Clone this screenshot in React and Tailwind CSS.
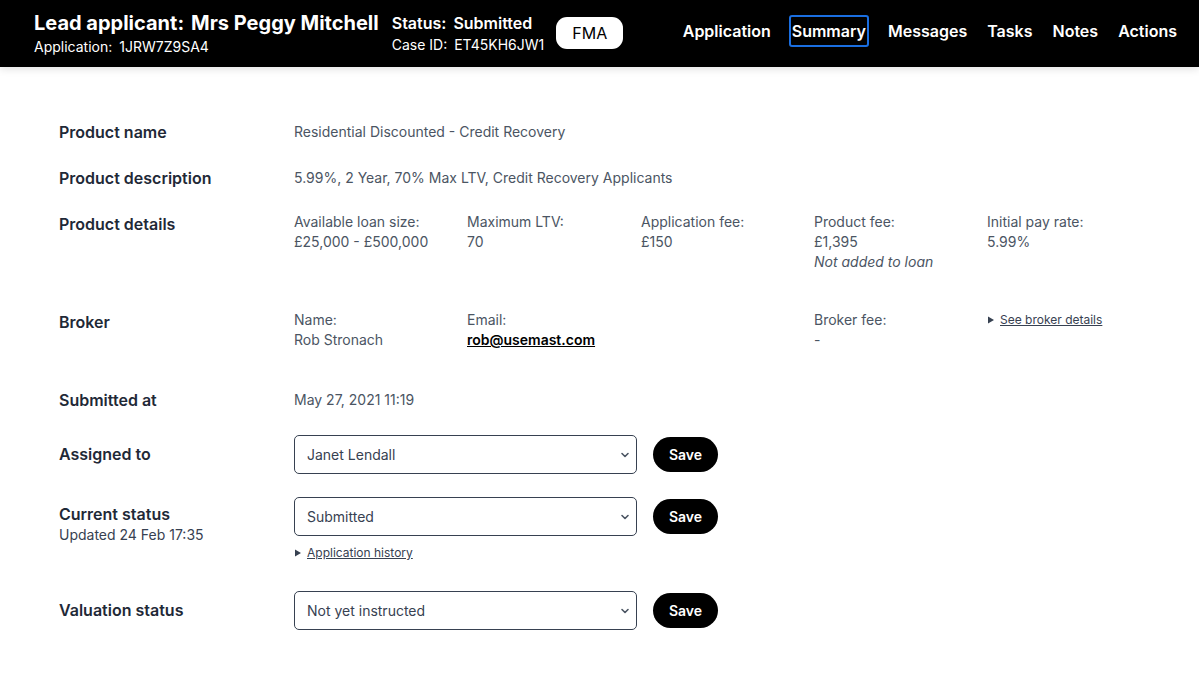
import React from "react";

const font = { fontFamily: "Inter, 'Noto Sans', sans-serif" };

function Field({ label, value, children }) {
  return (
    <div className="text-[14px] leading-[20px] text-[#4b5563]">
      <div>{label}</div>
      {value !== undefined && <div>{value}</div>}
      {children}
    </div>
  );
}

function Select({ value }) {
  return (
    <div className="relative w-[343px] h-[39px] border border-[#374151] rounded-[5px] flex items-center pl-[12px] text-[14px] text-[#374151] bg-white">
      {value}
      <svg className="absolute right-[6px] top-[15px]" width="10" height="8" viewBox="0 0 10 8">
        <path d="M2 2.5 L5 5.5 L8 2.5" stroke="#4b5563" strokeWidth="1.6" fill="none" strokeLinecap="round" strokeLinejoin="round" />
      </svg>
    </div>
  );
}

function SaveBtn() {
  return (
    <button className="ml-[16px] w-[65px] h-[35px] rounded-full bg-black text-white text-[14px] font-semibold">
      Save
    </button>
  );
}

function Disclosure({ text }) {
  return (
    <div className="flex items-center text-[12px] leading-[16px] text-[#374151]">
      <svg width="8" height="8" viewBox="0 0 8 8" className="mr-[5px]">
        <path d="M1 0.5 L7 4 L1 7.5 Z" fill="#374151" />
      </svg>
      <span className="underline">{text}</span>
    </div>
  );
}

export default function App() {
  return (
    <div className="min-h-[696px] bg-white" style={font}>
      <header className="h-[67px] bg-black text-white flex items-start shadow-[0_2px_8px_rgba(0,0,0,0.12)] relative z-10">
        <div className="pl-[34px] pt-[11px]">
          <div className="text-[20px] font-bold leading-[24px]">
            Lead applicant:<span className="ml-[7px]">Mrs Peggy Mitchell</span>
          </div>
          <div className="text-[14px] leading-[18px] mt-[3px]">
            Application:<span className="ml-[7px]">1JRW7Z9SA4</span>
          </div>
        </div>
        <div className="ml-[13px] pt-[13px]">
          <div className="text-[16px] font-semibold leading-[20px]">
            Status:<span className="ml-[7px]">Submitted</span>
          </div>
          <div className="text-[14px] leading-[18px] mt-[3px]">
            Case ID:<span className="ml-[7px]">ET45KH6JW1</span>
          </div>
        </div>
        <div className="ml-[12px] mt-[17px] w-[67px] h-[32px] rounded-[11px] bg-white text-black text-[16px] flex items-center justify-center">
          FMA
        </div>
        <nav className="ml-auto pr-[22px] flex items-center h-[62px] text-[16px] font-semibold">
          <span className="mr-[18px]">Application</span>
          <span className="border-2 border-[#1a6ee0] rounded-[3px] px-[1px] h-[32px] flex items-center leading-none mr-[19px]">Summary</span>
          <span className="mr-[20px]">Messages</span>
          <span className="mr-[20px]">Tasks</span>
          <span className="mr-[20px]">Notes</span>
          <span>Actions</span>
        </nav>
      </header>

      <main className="pl-[59px] pt-[55px] text-[#1f2937]">
        <div className="flex h-[46px]">
          <div className="w-[235px] text-[16px] font-semibold leading-[20px]">Product name</div>
          <div className="text-[14px] leading-[20px] text-[#4b5563]">Residential Discounted - Credit Recovery</div>
        </div>
        <div className="flex h-[46px]">
          <div className="w-[235px] text-[16px] font-semibold leading-[20px]">Product description</div>
          <div className="text-[14px] leading-[20px] text-[#4b5563]">5.99%, 2 Year, 70% Max LTV, Credit Recovery Applicants</div>
        </div>
        <div className="flex h-[98px]">
          <div className="w-[235px] text-[16px] font-semibold leading-[20px]">Product details</div>
          <div className="grid grid-cols-[173px_174px_173px_173px_173px] -mt-[2px]">
            <Field label="Available loan size:" value="£25,000 - £500,000" />
            <Field label="Maximum LTV:" value="70" />
            <Field label="Application fee:" value="£150" />
            <Field label="Product fee:" value="£1,395">
              <div className="italic">Not added to loan</div>
            </Field>
            <Field label="Initial pay rate:" value="5.99%" />
          </div>
        </div>
        <div className="flex h-[78px]">
          <div className="w-[235px] text-[16px] font-semibold leading-[20px]">Broker</div>
          <div className="grid grid-cols-[173px_347px_173px_173px] -mt-[2px]">
            <Field label="Name:" value="Rob Stronach" />
            <Field label="Email:">
              <div className="font-semibold text-black underline">rob@usemast.com</div>
            </Field>
            <Field label="Broker fee:" value="-" />
            <div className="pt-[2px]">
              <Disclosure text="See broker details" />
            </div>
          </div>
        </div>
        <div className="flex h-[45px]">
          <div className="w-[235px] text-[16px] font-semibold leading-[20px]">Submitted at</div>
          <div className="text-[14px] leading-[20px] text-[#4b5563]">May 27, 2021 11:19</div>
        </div>
        <div className="flex h-[62px]">
          <div className="w-[235px] text-[16px] font-semibold leading-[20px] pt-[9px]">Assigned to</div>
          <div className="flex items-start">
            <Select value="Janet Lendall" />
            <div className="mt-[2px]"><SaveBtn /></div>
          </div>
        </div>
        <div className="flex h-[94px]">
          <div className="w-[235px] pt-[7px]">
            <div className="text-[16px] font-semibold leading-[20px]">Current status</div>
            <div className="text-[14px] leading-[18px] text-[#374151] mt-[2px]">Updated 24 Feb 17:35</div>
          </div>
          <div>
            <div className="flex items-start">
              <Select value="Submitted" />
              <div className="mt-[2px]"><SaveBtn /></div>
            </div>
            <div className="mt-[9px]">
              <Disclosure text="Application history" />
            </div>
          </div>
        </div>
        <div className="flex">
          <div className="w-[235px] text-[16px] font-semibold leading-[20px] pt-[9px]">Valuation status</div>
          <div className="flex items-start">
            <Select value="Not yet instructed" />
            <div className="mt-[2px]"><SaveBtn /></div>
          </div>
        </div>
      </main>
    </div>
  );
}
